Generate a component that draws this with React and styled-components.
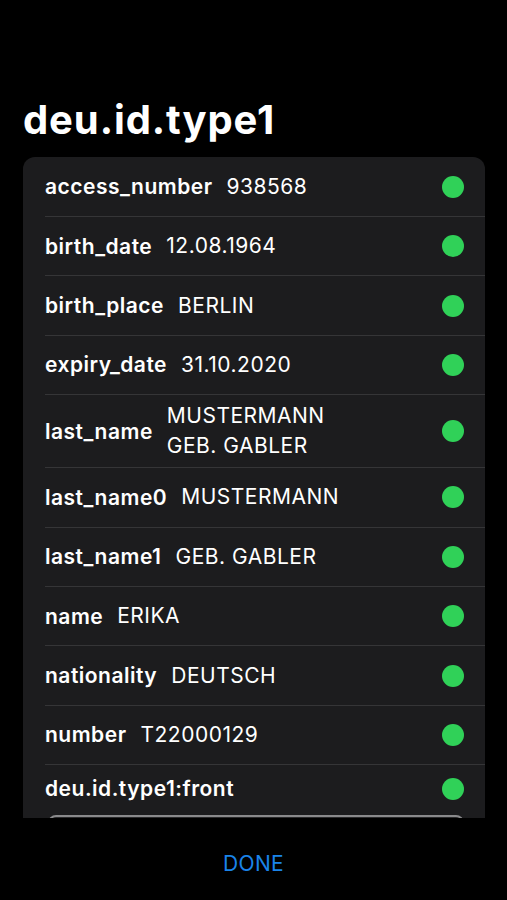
import styled, { createGlobalStyle } from "styled-components";

const GlobalStyle = createGlobalStyle`
  html, body {
    margin: 0;
    padding: 0;
    background: #000;
  }
  body {
    font-family: Inter, "Noto Sans", "Liberation Sans", sans-serif;
    color: #fff;
  }
`;

const fields = [
  { label: "access_number", value: ["938568"] },
  { label: "birth_date", value: ["12.08.1964"] },
  { label: "birth_place", value: ["BERLIN"] },
  { label: "expiry_date", value: ["31.10.2020"] },
  { label: "last_name", value: ["MUSTERMANN", "GEB. GABLER"] },
  { label: "last_name0", value: ["MUSTERMANN"] },
  { label: "last_name1", value: ["GEB. GABLER"] },
  { label: "name", value: ["ERIKA"] },
  { label: "nationality", value: ["DEUTSCH"] },
  { label: "number", value: ["T22000129"] },
];

const App = () => {
  return (
    <Screen>
      <GlobalStyle />
      <Title>deu.id.type1</Title>
      <Card>
        {fields.map((f, i) => (
          <Row key={f.label} $first={i === 0}>
            <Label>{f.label}</Label>
            <Value>
              {f.value.map((v) => (
                <div key={v}>{v}</div>
              ))}
            </Value>
            <Dot />
          </Row>
        ))}
        <ImageRow>
          <ImageHead>
            <Label>deu.id.type1:front</Label>
            <Value />
            <Dot />
          </ImageHead>
          <ImageBox />
        </ImageRow>
      </Card>
      <Footer>
        <DoneButton>DONE</DoneButton>
      </Footer>
    </Screen>
  );
};

const Screen = styled.div`
  width: 507px;
  height: 900px;
  display: flex;
  flex-direction: column;
  background: #000;
`;

const Title = styled.h1`
  flex-shrink: 0;
  margin: 0 0 13px;
  padding: 96px 0 0 23px;
  font-size: 40px;
  font-weight: 700;
  line-height: 48px;
  letter-spacing: 0.9px;
`;

const Card = styled.div`
  flex-shrink: 0;
  margin: 0 22px 0 23px;
  height: 661px;
  overflow: hidden;
  background: #1c1c1e;
  border-radius: 12px 12px 0 0;
`;

const Row = styled.div`
  display: flex;
  align-items: center;
  min-height: ${(p) => (p.$first ? "59px" : "59.4px")};
  padding: 0 21px 0 ${(p) => (p.$first ? "22px" : "0")};
  margin-left: ${(p) => (p.$first ? "0" : "22px")};
  border-top: ${(p) => (p.$first ? "none" : "1px solid #353537")};
  box-sizing: border-box;
`;

const ImageRow = styled.div`
  margin-left: 22px;
  border-top: 1px solid #353537;
  padding: 10px 21px 0 0;
`;

const ImageHead = styled.div`
  display: flex;
  align-items: center;
  height: 27px;
`;

const Label = styled.span`
  font-size: 21px;
  font-weight: 600;
  letter-spacing: 0.5px;
  margin-right: 14px;
  white-space: nowrap;
`;

const Value = styled.div`
  flex: 1;
  font-size: 21px;
  font-weight: 400;
  line-height: 30px;
  letter-spacing: 0.5px;
  padding: 6px 0;
`;

const Dot = styled.span`
  width: 22px;
  height: 22px;
  border-radius: 50%;
  background: #30d158;
  flex-shrink: 0;
`;

const ImageBox = styled.div`
  margin: 13px 0 0 3px;
  height: 200px;
  border: 2px solid #8a8a8c;
  border-radius: 8px;
  background: #2a2a2c;
`;

const Footer = styled.div`
  flex: 1;
  display: flex;
  justify-content: center;
  align-items: flex-start;
  padding-top: 33px;
`;

const DoneButton = styled.button`
  background: none;
  border: none;
  color: #1a84ea;
  font-family: inherit;
  font-size: 21px;
  font-weight: 400;
  letter-spacing: 0.3px;
  padding: 0;
  cursor: pointer;
`;

export default App;
